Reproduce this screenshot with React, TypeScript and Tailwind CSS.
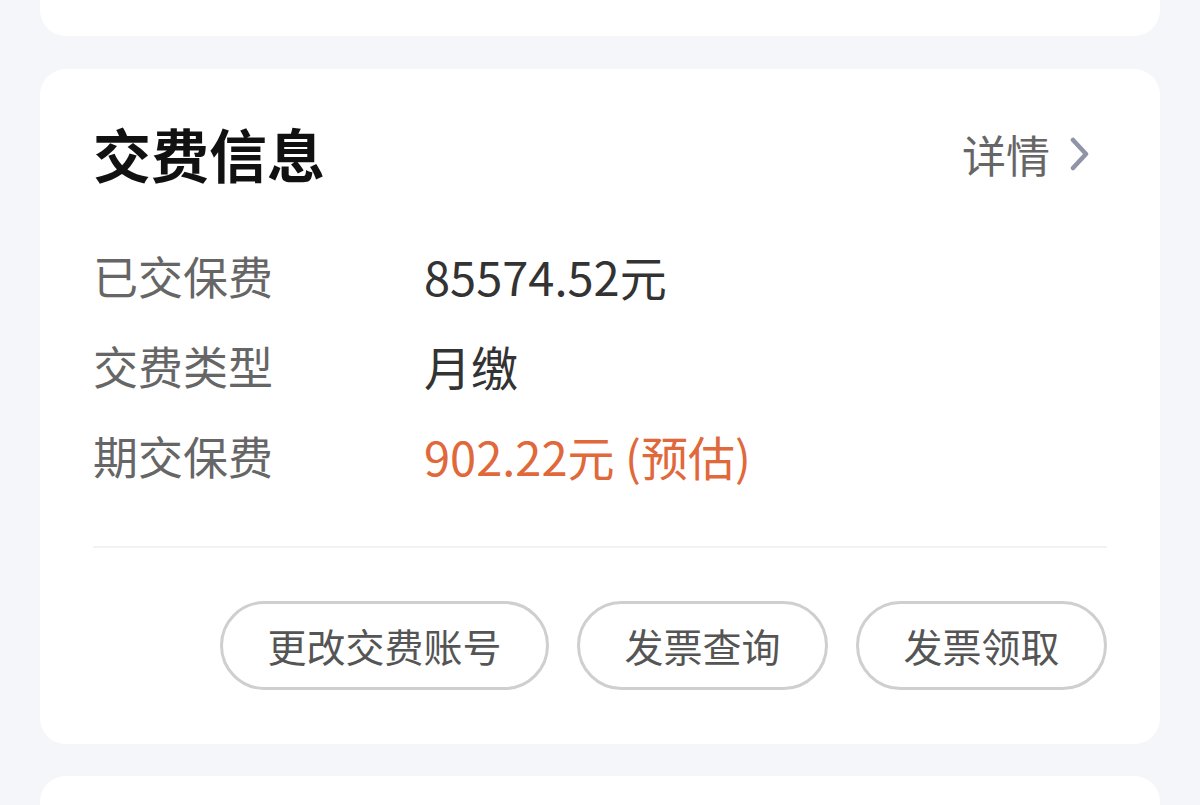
const rows = [
  { label: "已交保费", value: "85574.52元", accent: false },
  { label: "交费类型", value: "月缴", accent: false },
  { label: "期交保费", value: "902.22元 (预估)", accent: true },
];

const actions = [
  { text: "更改交费账号", width: "w-[329px]" },
  { text: "发票查询", width: "w-[251px]" },
  { text: "发票领取", width: "w-[251px]" },
];

const ChevronRight = () => (
  <svg width="20" height="34" viewBox="0 0 20 34" fill="none">
    <path
      d="M3 3 L16 17 L3 31"
      stroke="#8f94a6"
      strokeWidth="4.5"
      strokeLinecap="round"
      strokeLinejoin="round"
    />
  </svg>
);

export default function App() {
  return (
    <div
      className="h-[805px] overflow-hidden bg-[#f5f6fa] px-10 flex flex-col"
      style={{ fontFamily: '"Noto Sans CJK SC", "Noto Sans", sans-serif' }}
    >
      {/* previous card tail */}
      <div className="h-[36px] bg-white rounded-b-[26px] shrink-0" />

      {/* 交费信息 */}
      <div className="mt-[33px] bg-white rounded-[26px] px-[53px] pt-[44px] pb-[54px] shrink-0">
        <div className="flex items-center justify-between h-[80px]">
          <h2 className="text-[58px] font-bold text-[#111] leading-none">
            交费信息
          </h2>
          <div className="flex items-center gap-[20px] mr-[17px] mt-[2px]">
            <span className="text-[44px] text-[#666] leading-none">详情</span>
            <ChevronRight />
          </div>
        </div>

        <div className="mt-[40px]">
          {rows.map((row) => (
            <div key={row.label} className="flex items-center h-[90px] pb-[6px]">
              <span className="w-[331px] text-[45px] text-[#666] leading-none">
                {row.label}
              </span>
              <span
                className={`text-[47px] leading-none ${
                  row.accent ? "text-[#e0683a]" : "text-[#333]"
                }`}
              >
                {row.value}
              </span>
            </div>
          ))}
        </div>

        <div className="mt-[43px] h-[2px] bg-[#f2f2f4]" />

        <div className="mt-[53px] flex justify-end gap-[28px]">
          {actions.map((a) => (
            <button
              key={a.text}
              className={`${a.width} h-[89px] rounded-full border-[3px] border-[#cfcfcf] bg-white text-[39px] text-[#555] leading-none flex items-center justify-center`}
            >
              {a.text}
            </button>
          ))}
        </div>
      </div>

      {/* next card head */}
      <div className="mt-[32px] flex-1 bg-white rounded-t-[26px]" />
    </div>
  );
}
